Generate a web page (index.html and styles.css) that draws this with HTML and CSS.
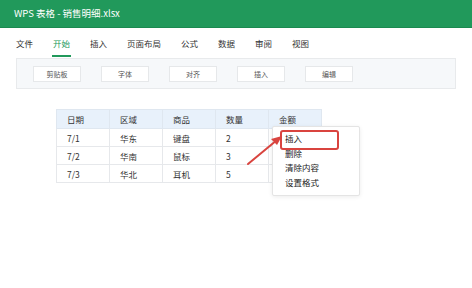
FILE: index.html
```html
<!DOCTYPE html>
<html lang="zh-CN">
<head>
    <meta charset="UTF-8">
    <title>WPS 表格 - 销售明细.xlsx</title>
    <link rel="stylesheet" href="styles.css">
</head>
<body>
    <div class="titlebar">WPS 表格 - 销售明细.xlsx</div>
    <div class="tabs">
        <span class="tab">文件</span>
        <span class="tab active">开始</span>
        <span class="tab">插入</span>
        <span class="tab">页面布局</span>
        <span class="tab">公式</span>
        <span class="tab">数据</span>
        <span class="tab">审阅</span>
        <span class="tab">视图</span>
    </div>
    <div class="ribbon">
        <div class="group">剪贴板</div>
        <div class="group">字体</div>
        <div class="group">对齐</div>
        <div class="group">插入</div>
        <div class="group">编辑</div>
    </div>
    <div class="sheet">
        <table class="grid">
            <thead>
                <tr><th>日期</th><th>区域</th><th>商品</th><th>数量</th><th>金额</th></tr>
            </thead>
            <tbody>
                <tr><td>7/1</td><td>华东</td><td>键盘</td><td>2</td><td></td></tr>
                <tr><td>7/2</td><td>华南</td><td>鼠标</td><td>3</td><td></td></tr>
                <tr><td>7/3</td><td>华北</td><td>耳机</td><td>5</td><td></td></tr>
            </tbody>
        </table>
        <!-- right-click menu over the 金额 column -->
        <ul class="menu">
            <li>插入</li>
            <li>删除</li>
            <li>清除内容</li>
            <li>设置格式</li>
        </ul>
        <div class="highlight"></div>
        <svg class="arrow" width="50" height="40" viewBox="0 0 50 40">
            <line x1="4" y1="35" x2="33" y2="11" stroke="#d9443f" stroke-width="2" stroke-linecap="round"/>
            <polygon points="38,7 27,10 33,16" fill="#d9443f"/>
        </svg>
    </div>
</body>
</html>
```

FILE: styles.css
```css
body {
    margin: 0;
    width: 472px;
    height: 288px;
    overflow: hidden;
    background: #fff;
    font-family: "Noto Sans CJK SC", "Noto Sans", sans-serif;
    font-size: 9px;
    color: #333;
}

.titlebar {
    height: 27px;
    background: #21995b;
    color: #fff;
    font-size: 9.5px;
    line-height: 27px;
    padding-left: 14px;
    border-bottom: 1px solid #1b8a50;
}

.tabs {
    display: flex;
    gap: 20px;
    padding: 8px 0 0 16px;
    height: 22px;
}

.tab {
    font-size: 8.5px;
    line-height: 14px;
    height: 18px;
    color: #333;
}

.tab.active {
    color: #21995b;
    border-bottom: 2px solid #21995b;
    padding: 0 1px;
    margin: 0 -1px;
    height: 19px;
}

.ribbon {
    display: flex;
    gap: 20px;
    margin: 0 16px;
    padding: 7px 16px 6px;
    height: 16px;
    background: #f6f8fa;
    border: 1px solid #e8eaec;
}

.group {
    width: 46px;
    height: 14px;
    line-height: 14px;
    text-align: center;
    font-size: 7px;
    color: #555;
    background: #fff;
    border: 1px solid #e6e8ea;
}

.sheet {
    position: relative;
    padding: 20px 0 0 56px;
}

.grid {
    border-collapse: collapse;
    table-layout: fixed;
    width: 265px;
}

.grid th,
.grid td {
    width: 42px;
    padding: 0 0 0 10px;
    text-align: left;
    font-weight: normal;
    border: 1px solid #e6e8eb;
    font-size: 8.5px;
    color: #333;
}

.grid th {
    height: 18px;
    background: #e8f1fb;
    border-color: #dfe7f0;
}

.grid td {
    height: 17px;
}

.menu {
    position: absolute;
    left: 272px;
    top: 37px;
    width: 86px;
    margin: 0;
    padding: 4px 0 6px;
    list-style: none;
    background: #fff;
    border: 1px solid #e4e4e4;
    border-radius: 2px;
    box-shadow: 0 1px 4px rgba(0, 0, 0, 0.08);
}

.menu li {
    padding-left: 12px;
    height: 14.5px;
    line-height: 14.5px;
    font-size: 8.5px;
    color: #222;
}

.highlight {
    position: absolute;
    left: 280px;
    top: 41px;
    width: 55px;
    height: 16px;
    border: 2px solid #d9443f;
    border-radius: 3px;
}

.arrow {
    position: absolute;
    left: 244px;
    top: 40px;
}
```
